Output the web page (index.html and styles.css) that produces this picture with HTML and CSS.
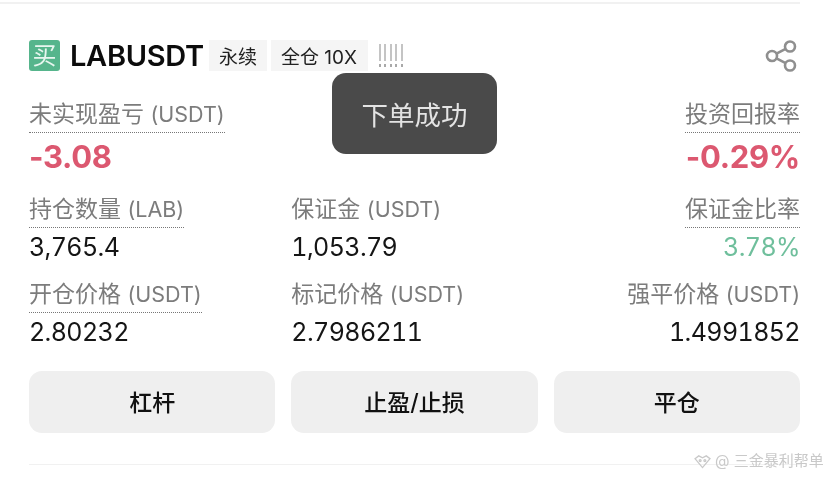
FILE: index.html
```html
<!DOCTYPE html>
<html lang="zh-CN">
<head>
<meta charset="utf-8">
<title>LABUSDT</title>
<link rel="stylesheet" href="styles.css">
</head>
<body>
<div class="page">
  <div class="top-rule"></div>
  <section class="card">
    <header class="head">
      <span class="side-badge">买</span>
      <span class="symbol">LABUSDT</span>
      <span class="tag">永续</span>
      <span class="tag tag-wide">全仓 10X</span>
      <span class="bars"><i></i><i></i><i></i><i></i><i></i></span>
      <svg class="share" viewBox="0 0 32 32" width="32" height="32" fill="none" stroke="#8f8f8f" stroke-width="2.6">
        <circle cx="7" cy="16" r="5"/>
        <circle cx="25" cy="6.5" r="5"/>
        <circle cx="25" cy="25.5" r="5"/>
        <path d="M11.5 13.6 20.6 8.8M11.5 18.4l9.1 4.8"/>
      </svg>
    </header>
    <div class="metrics">
      <div class="metric metric-hero">
        <span class="label dotted">未实现盈亏 <span class="unit">(USDT)</span></span>
        <span class="value hero loss">-3.08</span>
      </div>
      <div class="metric metric-hero"></div>
      <div class="metric metric-hero right">
        <span class="label dotted">投资回报率</span>
        <span class="value hero loss">-0.29%</span>
      </div>
      <div class="metric">
        <span class="label dotted">持仓数量 <span class="unit">(LAB)</span></span>
        <span class="value">3,765.4</span>
      </div>
      <div class="metric">
        <span class="label">保证金 <span class="unit">(USDT)</span></span>
        <span class="value">1,053.79</span>
      </div>
      <div class="metric right">
        <span class="label dotted">保证金比率</span>
        <span class="value gain">3.78%</span>
      </div>
      <div class="metric">
        <span class="label dotted">开仓价格 <span class="unit">(USDT)</span></span>
        <span class="value">2.80232</span>
      </div>
      <div class="metric">
        <span class="label">标记价格 <span class="unit">(USDT)</span></span>
        <span class="value">2.7986211</span>
      </div>
      <div class="metric right">
        <span class="label">强平价格 <span class="unit">(USDT)</span></span>
        <span class="value">1.4991852</span>
      </div>
    </div>
    <div class="actions">
      <button class="action">杠杆</button>
      <button class="action">止盈/止损</button>
      <button class="action">平仓</button>
    </div>
  </section>
  <div class="bottom-rule"></div>
  <div class="toast">下单成功</div>
  <div class="watermark">
    <svg viewBox="0 0 18 16" width="17" height="15" fill="none" stroke="#c9c9c9" stroke-width="1.4">
      <path d="M1 5l4-3 4 2 4-2 4 3-8 9.5z"/>
      <circle cx="6.5" cy="7" r="1"/>
      <circle cx="11.5" cy="7" r="1"/>
    </svg>
    <span>@ 三金暴利帮单</span>
  </div>
</div>
</body>
</html>
```
FILE: styles.css
```css
* {
  box-sizing: border-box;
}
html, body {
  margin: 0;
  padding: 0;
  background: #fff;
}
.page {
  position: relative;
  width: 829px;
  height: 477px;
  overflow: hidden;
  font-family: "Inter", "Noto Sans CJK SC", sans-serif;
  color: #111;
  filter: blur(0.35px);
}
.top-rule {
  width: 800px;
  height: 2px;
  margin-top: 2px;
  background: #f1f1f1;
}
.card {
  padding: 36px 29px 0;
}
.head {
  display: flex;
  align-items: center;
  height: 31px;
}
.side-badge {
  width: 31px;
  height: 31px;
  border-radius: 3px;
  background: #56b58c;
  color: #e8f6ef;
  font-size: 24px;
  line-height: 31px;
  text-align: center;
}
.symbol {
  margin-left: 10px;
  font-size: 29px;
  font-weight: 600;
  letter-spacing: -0.3px;
  color: #0c0c0c;
}
.tag {
  display: flex;
  align-items: center;
  height: 31px;
  margin-left: 5px;
  padding: 0 10px;
  background: #f5f5f5;
  font-size: 19px;
  color: #222;
}
.tag-wide {
  margin-left: 4px;
  padding: 0 11px 0 10px;
}
.bars {
  display: flex;
  gap: 3.5px;
  margin-left: 11px;
}
.bars i {
  width: 2px;
  height: 23px;
  background: linear-gradient(#c4c4c4 0 17px, transparent 17px 20px, #a9a9a9 20px);
}
.share {
  margin-left: auto;
  margin-right: 3px;
}
.metrics {
  display: grid;
  grid-template-columns: repeat(3, 1fr);
  column-gap: 16px;
  margin-top: 30px;
}
.metric {
  display: flex;
  flex-direction: column;
  align-items: flex-start;
  height: 85px;
}
.metric-hero {
  height: 95px;
}
.right {
  align-items: flex-end;
}
.label {
  height: 32px;
  font-size: 23px;
  line-height: 26px;
  color: #7c7c7c;
  white-space: nowrap;
}
.unit {
  font-size: 21.5px;
}
.dotted {
  border-bottom: 1px dotted #777;
}
.value {
  margin-top: 4px;
  font-size: 25px;
  line-height: 30px;
  letter-spacing: -0.6px;
  font-variant-numeric: tabular-nums;
  color: #151515;
}
.hero {
  margin-top: 2px;
  font-size: 31px;
  line-height: 44px;
  font-weight: 700;
  letter-spacing: -0.3px;
  font-variant-numeric: normal;
}
.loss {
  color: #dc5870;
}
.gain {
  color: #6fbf9c;
}
.actions {
  display: grid;
  grid-template-columns: repeat(3, 1fr);
  column-gap: 16px;
  margin-top: 5px;
}
.action {
  height: 62px;
  border: 0;
  border-radius: 13px;
  background: #efefef;
  font-family: inherit;
  font-size: 23px;
  font-weight: 500;
  color: #111;
  padding: 0 0 2px;
}
.bottom-rule {
  height: 1px;
  margin: 31px 29px 0;
  background: #f1f1f1;
}
.toast {
  position: absolute;
  left: 332px;
  top: 73px;
  width: 165px;
  height: 81px;
  border-radius: 14px;
  background: #4a4a4a;
  color: #e4e4e4;
  font-size: 26.5px;
  line-height: 84px;
  text-align: center;
}
.watermark {
  position: absolute;
  left: 694px;
  top: 451px;
  display: flex;
  align-items: center;
  gap: 4px;
  font-size: 15px;
  line-height: 20px;
  color: #c9c9c9;
  white-space: nowrap;
}
```
